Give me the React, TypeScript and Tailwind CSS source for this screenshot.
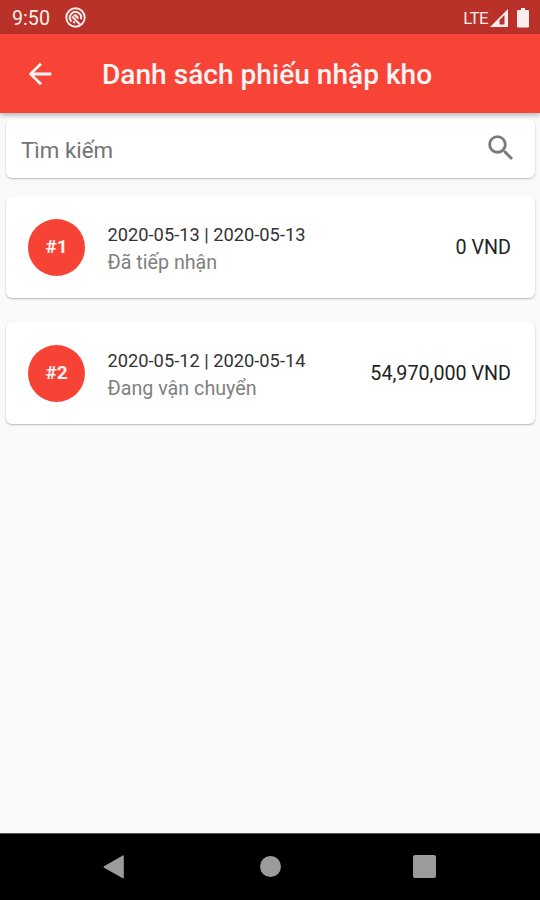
interface Receipt {
  id: number;
  dates: string;
  status: string;
  total: string;
}

const receipts: Receipt[] = [
  { id: 1, dates: '2020-05-13 | 2020-05-13', status: 'Đã tiếp nhận', total: '0 VND' },
  { id: 2, dates: '2020-05-12 | 2020-05-14', status: 'Đang vận chuyển', total: '54,970,000 VND' },
];

export default function App() {
  return (
    <div className="flex h-[900px] w-[540px] flex-col overflow-hidden bg-[#fafafa] font-[Roboto,sans-serif]">
      <StatusBar />
      <AppBar />
      <main className="flex-1 pt-[6px] pr-[5px] pl-[6px]">
        <SearchBox />
        <div className="mt-[18px] flex flex-col gap-[24px]">
          {receipts.map((receipt) => (
            <ReceiptCard key={receipt.id} receipt={receipt} />
          ))}
        </div>
      </main>
      <NavigationBar />
    </div>
  );
}

function StatusBar() {
  return (
    <div className="flex h-[34px] shrink-0 items-center bg-[#b93129] pt-[1px] pr-[11px] pl-[12px] text-[#ffeeed]">
      <span className="w-[53px] pt-[3px] text-[19.7px] leading-none">9:50</span>
      <svg className="h-[21px] w-[21px]" viewBox="0 0 21 21" fill="none" stroke="currentColor">
        <circle cx="10.5" cy="10.5" r="9.2" strokeWidth="1.9" />
        <path d="M6.500 14.500A5.600 5.600 0 1 1 15.800 12.300" strokeWidth="2" />
        <path d="M8.500 8.300a3 3 0 0 1 4.500 3.500z" fill="currentColor" strokeWidth="1" />
        <path d="M7 9.500l8 8" strokeWidth="2" />
        <path d="M8 14.500l2 1.500" strokeWidth="1.600" />
      </svg>
      <div className="ml-auto flex items-center">
        <span className="mr-[2px] pt-[1px] text-[16.9px] leading-none tracking-[-0.6px]">LTE</span>
        <svg className="mr-[9px] h-[18px] w-[18px]" viewBox="0 0 18 18" fill="currentColor">
          <path fillRule="evenodd" d="M0 18L18 0v18zM9.500 15.500h5V6l-5 5z" />
        </svg>
        <svg className="h-[20px] w-[12px]" viewBox="0 0 12 20" fill="currentColor">
          <path d="M4 0h4v2h3a1 1 0 0 1 1 1v15.500a1 1 0 0 1-1 1H1a1 1 0 0 1-1-1V3a1 1 0 0 1 1-1h3z" />
        </svg>
      </div>
    </div>
  );
}

function AppBar() {
  return (
    <header className="relative z-10 flex h-[79px] shrink-0 items-center bg-[#f74437] pl-[23px] text-[#fff4f3] shadow-[0_2px_5px_rgba(0,0,0,0.3)]">
      <svg className="mr-[45px] h-[34px] w-[34px]" viewBox="0 0 24 24" fill="currentColor">
        <path d="M20 11H7.830l5.590-5.590L12 4l-8 8 8 8 1.410-1.410L7.830 13H20v-2z" />
      </svg>
      <h1 className="pt-[3px] text-[28.1px] leading-none font-medium whitespace-nowrap">Danh sách phiếu nhập kho</h1>
    </header>
  );
}

function SearchBox() {
  return (
    <div className="flex h-[59px] items-center justify-between rounded-[6px] bg-white pt-[2px] pr-[17px] pl-[15px] shadow-[0_1px_2px_rgba(0,0,0,0.25)]">
      <span className="pt-[2px] text-[22.3px] leading-none text-[#737373]">Tìm kiếm</span>
      <svg className="mb-[3px] h-[34px] w-[34px] text-[#7a7a7a]" viewBox="0 0 24 24" fill="currentColor">
        <path d="M15.500 14h-.79l-.28-.27A6.471 6.471 0 0 0 16 9.500 6.500 6.500 0 1 0 9.500 16c1.610 0 3.090-.59 4.230-1.570l.27.28v.79l5 4.990L20.490 19l-4.990-5zm-6 0C7.010 14 5 11.990 5 9.500S7.010 5 9.500 5 14 7.010 14 9.500 11.990 14 9.500 14z" />
      </svg>
    </div>
  );
}

function ReceiptCard({ receipt }: { receipt: Receipt }) {
  return (
    <div className="flex h-[102px] items-center rounded-[6px] bg-white pr-[24px] pl-[22px] shadow-[0_1px_2px_rgba(0,0,0,0.28)]">
      <div className="mr-[22.5px] flex h-[57px] w-[57px] items-center justify-center rounded-full bg-[#f74335] pt-[1px] text-[19px] font-bold text-[#fff4f3]">
        #{receipt.id}
      </div>
      <div className="flex flex-1 flex-col pt-[4px] leading-[28px]">
        <span className="text-[18.28px] text-[#333333]">{receipt.dates}</span>
        <span className="text-[19.7px] text-[#808080]">{receipt.status}</span>
      </div>
      <span className="pt-[2px] text-[19.7px] text-[#222222]">{receipt.total}</span>
    </div>
  );
}

function NavigationBar() {
  return (
    <nav className="flex h-[67px] shrink-0 items-center justify-between border-t border-[#555555] bg-black pr-[104px] pb-[1px] pl-[103px] text-[#9b9b9b]">
      <svg className="h-[24px] w-[22px]" viewBox="0 0 22 24" fill="currentColor">
        <path d="M1 11.300L19.800.400q1-.4 1 .6v21.600q0 1-1 .6L1 12.700q-1-.7 0-1.400z" />
      </svg>
      <div className="ml-[2px] h-[21px] w-[21px] rounded-full bg-current" />
      <div className="h-[23px] w-[23px] rounded-[2px] bg-current" />
    </nav>
  );
}
